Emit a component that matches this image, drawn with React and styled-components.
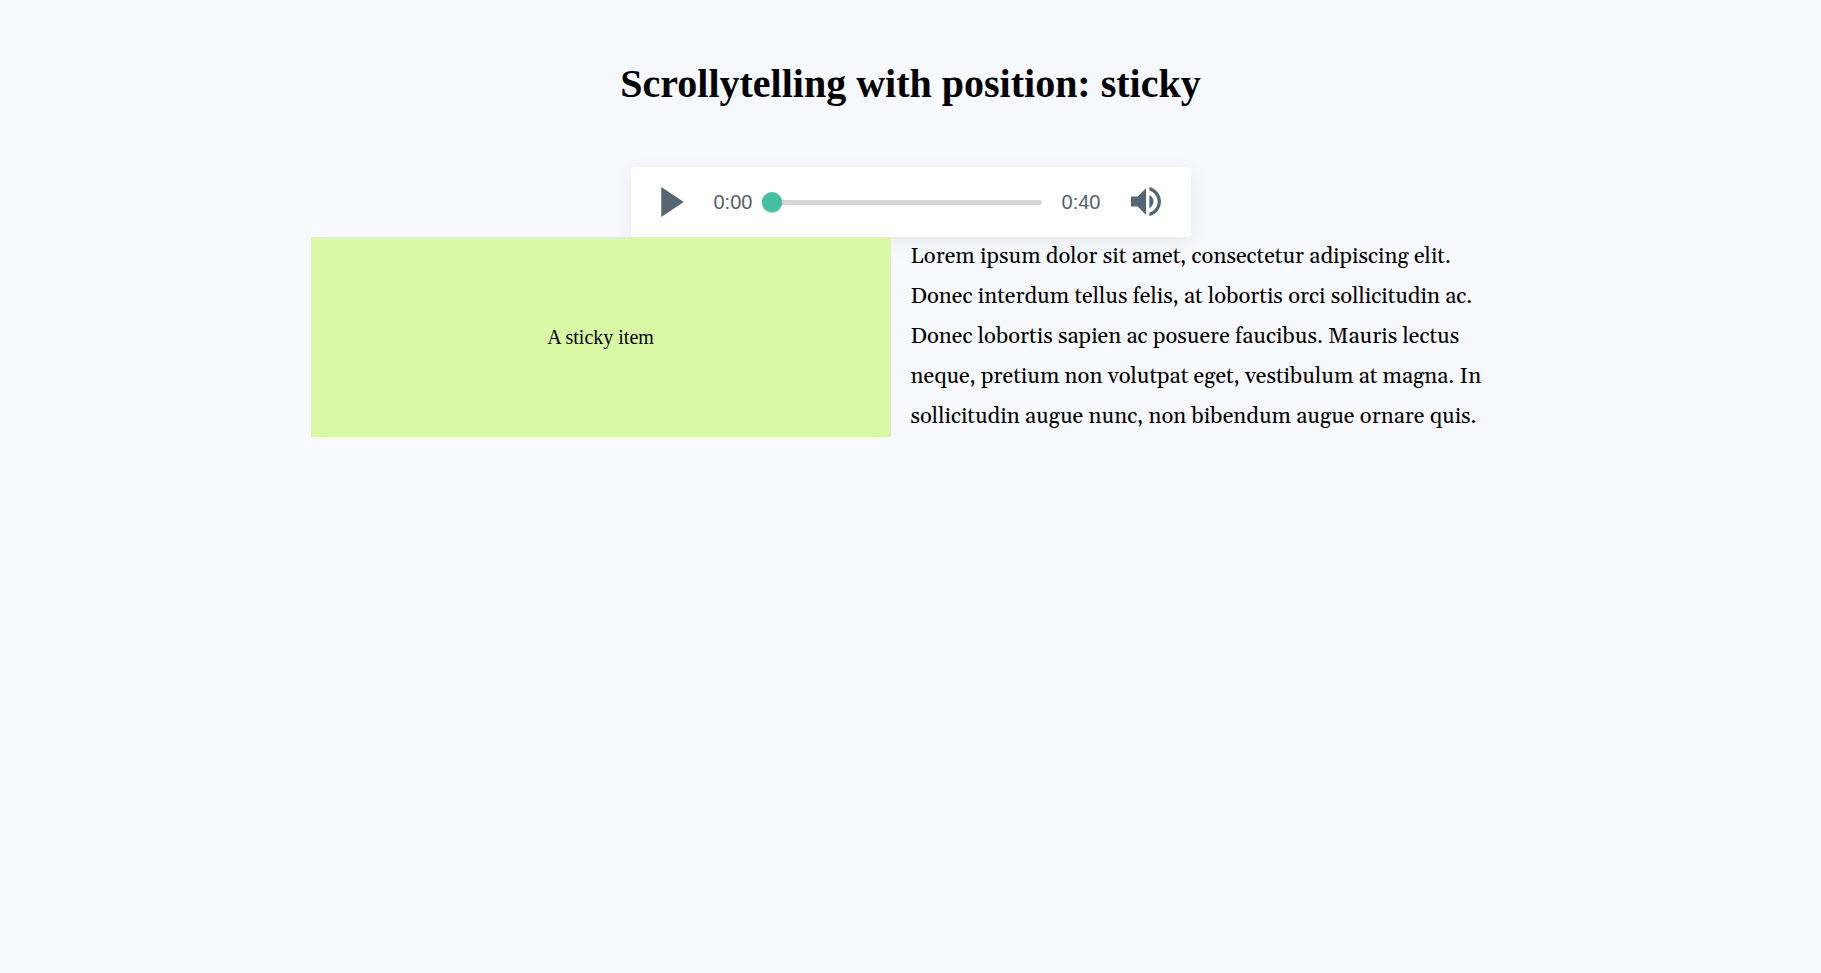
import React, {useState} from 'react'
import styled, {createGlobalStyle} from 'styled-components'

const DURATION = 40

const formatTime = (seconds) => {
    const min = Math.floor(seconds / 60)
    const sec = Math.floor(seconds % 60)
    return `${min}:${sec < 10 ? '0' : ''}${sec}`
}

function AudioPlayer() {
    const [ time, setTime ] = useState(0)

    return (
        <Player>
            <IconButton type="button" aria-label="Play">
                <svg width="23" height="30" viewBox="0 0 18 24">
                    <path fill="#566574" fillRule="evenodd" d="M18 12L0 24V0"/>
                </svg>
            </IconButton>
            <Controls>
                <Time>{formatTime(time)}</Time>
                <Slider
                    type="range"
                    aria-label="Seek"
                    min="0"
                    max={DURATION}
                    value={time}
                    onChange={e => setTime(Number(e.target.value))}
                />
                <Time>{formatTime(DURATION)}</Time>
            </Controls>
            <IconButton type="button" aria-label="Volume">
                <svg width="30" height="30" viewBox="0 0 24 24">
                    <path fill="#566574" fillRule="evenodd" d="M14.667 0v2.747c3.853 1.146 6.666 4.72 6.666 8.946 0 4.227-2.813 7.787-6.666 8.934v2.76C20 22.173 24 17.4 24 11.693 24 5.987 20 1.213 14.667 0zM18 11.693c0-2.36-1.333-4.386-3.333-5.373v10.707c2-.947 3.333-2.987 3.333-5.334zm-18-4v8h5.333L12 22.36V1.027L5.333 7.693H0z"/>
                </svg>
            </IconButton>
        </Player>
    )
}

function App() {
    return (
        <>
            <GlobalStyle />
            <main>
                <Title>Scrollytelling with position: sticky</Title>
                <AudioPlayer />
                <Story>
                    <StickyItem>A sticky item</StickyItem>
                    <Text>
                        Lorem ipsum dolor sit amet, consectetur adipiscing elit. Donec interdum tellus felis,
                        at lobortis orci sollicitudin ac. Donec lobortis sapien ac posuere faucibus. Mauris
                        lectus neque, pretium non volutpat eget, vestibulum at magna. In sollicitudin augue
                        nunc, non bibendum augue ornare quis.
                    </Text>
                </Story>
            </main>
        </>
    )
}

const GlobalStyle = createGlobalStyle`
  * {
    box-sizing: border-box;
  }

  body {
    margin: 0;
    background-color: ghostwhite;
    color: #000;
    font-family: "Liberation Serif", "Times New Roman", serif;
    font-size: 20px;
  }
`

const Title = styled.h1`
  margin: 0;
  padding: 60px 20px;
  font-size: 40px;
  line-height: 47px;
  text-align: center;
`

const Player = styled.div`
  display: flex;
  align-items: center;
  gap: 30px;
  max-width: 560px;
  height: 70px;
  margin: 0 auto;
  padding: 0 30px;
  border-radius: 4px;
  background-color: #fff;
  box-shadow: 0 5px 20px 0 rgba(0, 0, 0, .07);
`

const IconButton = styled.button`
  display: flex;
  padding: 0;
  border: none;
  background: none;
  cursor: pointer;
`

const Controls = styled.div`
  display: flex;
  flex: 1;
  align-items: center;
  min-width: 0;
`

const Time = styled.span`
  color: #55606e;
  font-family: "Liberation Sans", Arial, sans-serif;
  font-size: 20px;
  line-height: 24px;
`

const Slider = styled.input`
  flex: 1;
  min-width: 0;
  height: 20px;
  margin: 0 20px 0 10px;
  appearance: none;
  background: none;
  cursor: pointer;

  &::-webkit-slider-runnable-track {
    height: 5px;
    border-radius: 3px;
    background-color: #d8d8d8;
  }

  &::-webkit-slider-thumb {
    width: 20px;
    height: 20px;
    margin-top: -8px;
    appearance: none;
    border-radius: 50%;
    background-color: #44bfa3;
    box-shadow: 0 1px 2px 0 rgba(0, 0, 0, .32);
  }
`

const Story = styled.section`
  display: flex;
  align-items: flex-start;
  gap: 20px;
  max-width: 1200px;
  margin: 0 auto;
`

const StickyItem = styled.div`
  position: sticky;
  top: 0;
  display: flex;
  flex: 0 0 calc(50% - 20px);
  align-items: center;
  justify-content: center;
  height: 200px;
  background-color: #daf7a6;
`

const Text = styled.p`
  flex: 1;
  margin: 0;
  font-family: Georgia, Gelasio, "Liberation Serif", serif;
  font-size: 22px;
  line-height: 40px;
`

export default App
